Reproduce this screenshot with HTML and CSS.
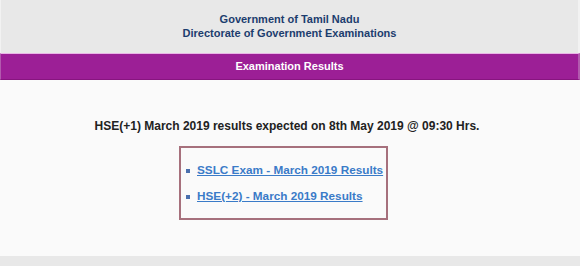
FILE: index.html
```html
<!DOCTYPE html>
<html>
<head>
<meta charset="utf-8">
<link rel="stylesheet" href="styles.css">
</head>
<body>
<div class="page">
  <header class="top">
    <div class="top-line">Government of Tamil Nadu</div>
    <div class="top-line">Directorate of Government Examinations</div>
  </header>
  <div class="bar">Examination Results</div>
  <main class="content">
    <h1 class="notice">HSE(+1) March 2019 results expected on 8th May 2019 @ 09:30 Hrs.</h1>
    <div class="box">
      <ul class="links">
        <li><a href="#">SSLC Exam - March 2019 Results</a></li>
        <li><a href="#">HSE(+2) - March 2019 Results</a></li>
      </ul>
    </div>
  </main>
  <footer class="bottom"></footer>
</div>
</body>
</html>
```

FILE: styles.css
```css
html, body {
  margin: 0;
  padding: 0;
  background: #fafafa;
}
body {
  font-family: "Liberation Sans", Arial, sans-serif;
}
.page {
  width: 580px;
  height: 266px;
  display: flex;
  flex-direction: column;
  background: #fafafa;
}
.top {
  height: 53px;
  box-sizing: border-box;
  padding-top: 12px;
  background: #e8e8e8;
  border-left: 1px solid #f2f2f2;
  border-right: 2px solid #f2f2f2;
  text-align: center;
}
.top-line {
  font-size: 11px;
  font-weight: bold;
  line-height: 14px;
  color: #1c3d6e;
}
.bar {
  height: 27px;
  box-sizing: border-box;
  background: #9c1f96;
  border-top: 1px solid #e9b6e6;
  border-bottom: 1px solid #87157f;
  border-left: 1px solid #b25aae;
  border-right: 2px solid #b25aae;
  color: #ffffff;
  font-size: 11px;
  font-weight: bold;
  line-height: 25px;
  text-align: center;
}
.content {
  flex: 1;
  display: flex;
  flex-direction: column;
}
.notice {
  margin: 39px 0 0 0;
  padding-right: 6px;
  font-size: 12px;
  line-height: 14px;
  font-weight: bold;
  color: #222222;
  text-align: center;
}
.box {
  margin: 13px 0 0 179px;
  width: 209px;
  height: 74px;
  box-sizing: border-box;
  border: 2px solid #a6707c;
  padding-top: 15px;
}
.links {
  list-style: none;
  margin: 0;
  padding: 0 0 0 5px;
  display: flex;
  flex-direction: column;
  gap: 12px;
}
.links li {
  display: flex;
  align-items: center;
  font-size: 11.75px;
  line-height: 14px;
  font-weight: bold;
  white-space: nowrap;
}
.links li::before {
  content: "";
  flex: none;
  width: 4px;
  height: 4px;
  background: #4a70ae;
  margin-right: 7px;
  margin-top: 2px;
}
.links a {
  color: #3a7bc8;
  text-decoration: underline;
}
.bottom {
  height: 10px;
  background: #e8e8e8;
}
```
